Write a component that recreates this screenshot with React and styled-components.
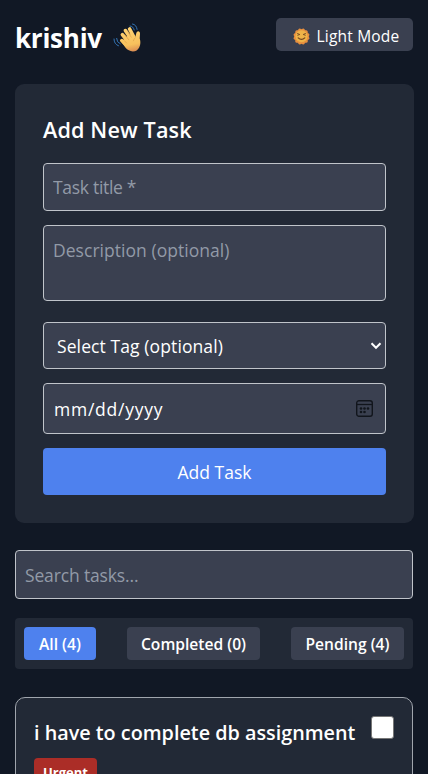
import React from "react";
import styled, { createGlobalStyle } from "styled-components";

const Global = createGlobalStyle`
  *, *::before, *::after { box-sizing: border-box; }
  html, body { margin: 0; background: #111825; }
  body { height: 774px; overflow: hidden; }
  body, button, input, textarea, select {
    font-family: "Open Sans", "Noto Sans", sans-serif;
  }
`;

const Page = styled.main`
  height: 774px;
  overflow: hidden;
  padding: 18px 15px 0;
  color: #fff;
`;

const Header = styled.header`
  display: flex;
  justify-content: space-between;
  height: 66px;
`;

const Greeting = styled.h1`
  display: flex;
  align-items: center;
  gap: 11px;
  margin: 0;
  height: 40px;
  font-size: 26px;
  line-height: 40px;
  font-weight: 700;
  letter-spacing: -0.25px;
`;

const ThemeToggle = styled.button`
  display: flex;
  align-items: center;
  gap: 7px;
  width: 137.5px;
  height: 33px;
  padding: 3px 0 0 17px;
  border: 0;
  border-radius: 5px;
  background: #3a4050;
  color: #fff;
  font-size: 15.5px;
  letter-spacing: 0.2px;
  white-space: nowrap;
`;

const FormCard = styled.form`
  display: flex;
  flex-direction: column;
  height: 438.5px;
  padding: 31px 27.5px 0 28px;
  margin-right: -0.5px;
  border-radius: 9px;
  background: #222936;
`;

const FormTitle = styled.h2`
  margin: 0 0 18px;
  font-size: 21.6px;
  line-height: 30px;
  font-weight: 600;
  letter-spacing: 0.15px;
`;

const fieldBase = `
  display: block;
  width: 100%;
  margin: 0;
  border: 1px solid #c0c4ca;
  border-radius: 4px;
  background: #3a4050;
  color: #fff;
  font-size: 17.5px;
  outline: none;
  &::placeholder { color: #929aa7; opacity: 1; }
`;

const TextInput = styled.input`
  ${fieldBase}
  flex: none;
  height: 48px;
  padding: 0 10px 1px 9px;
  letter-spacing: -0.3px;
`;

const TextArea = styled.textarea`
  ${fieldBase}
  flex: none;
  height: 76px;
  margin-top: 14px;
  padding: 11px 9px;
  line-height: 26px;
  letter-spacing: 0.04px;
  resize: none;
`;

const SelectWrap = styled.div`
  position: relative;
  margin-top: 21px;
  svg { position: absolute; right: 4.5px; top: 19px; }
`;

const Select = styled.select`
  ${fieldBase}
  height: 47px;
  padding: 1px 24px 0 13px;
  letter-spacing: 0.1px;
  appearance: none;
`;

const DateField = styled.div`
  ${fieldBase}
  display: flex;
  align-items: center;
  justify-content: space-between;
  height: 51px;
  margin-top: 14px;
  padding: 1px 12px 0 10px;
  letter-spacing: 0.75px;
  svg { margin-top: -2px; }
`;

const SubmitButton = styled.button`
  height: 47px;
  margin-top: 14px;
  padding: 1px 0 0;
  border: 0;
  border-radius: 4px;
  background: #4e81ee;
  color: #fff;
  font-size: 17.5px;
`;

const SearchInput = styled(TextInput)`
  height: 49px;
  margin-top: 27.5px;
  padding: 1px 10px 0 9px;
  letter-spacing: -0.15px;
`;

const FilterBar = styled.nav`
  display: flex;
  justify-content: space-between;
  height: 51px;
  margin-top: 19px;
  padding: 9px 9px 0;
  border-radius: 4px;
  background: #222936;
`;

const FilterButton = styled.button`
  width: ${(p) => p.$width}px;
  height: 33px;
  padding: 1px 0 0;
  border: 0;
  border-radius: 4px;
  background: ${(p) => (p.$active ? "#4e81ee" : "#3a4050")};
  color: #fff;
  font-size: 15.6px;
  font-weight: 600;
  white-space: nowrap;
`;

const TaskCard = styled.article`
  height: 160px;
  margin-top: 28px;
  padding: 18px 18px 0;
  border: 1px solid #a0a5ad;
  border-radius: 10px;
  background: #222936;
`;

const TaskHead = styled.div`
  display: flex;
  justify-content: space-between;
  height: 42px;
`;

const TaskTitle = styled.h3`
  margin: 0;
  font-size: 19.8px;
  line-height: 34px;
  font-weight: 600;
  white-space: nowrap;
`;

const Checkbox = styled.input`
  appearance: none;
  flex: none;
  width: 23px;
  height: 23px;
  margin: 0;
  border: 1px solid #767676;
  border-radius: 3px;
  background: #fff;
`;

const Tag = styled.span`
  display: inline-block;
  width: 63px;
  height: 28px;
  border-radius: 4px;
  background: #ab2d27;
  font-size: 13px;
  line-height: 28px;
  font-weight: 700;
  text-align: center;
`;

const WaveIcon = () => (
  <svg width="30" height="30" viewBox="0 0 30 30" fill="none">
    <defs>
      <linearGradient id="hand" x1="14" y1="5" x2="19" y2="29" gradientUnits="userSpaceOnUse">
        <stop stopColor="#ffd273" />
        <stop offset=".7" stopColor="#f7c05c" />
        <stop offset="1" stopColor="#d98a52" />
      </linearGradient>
    </defs>
    <g stroke="#3474b4" strokeWidth="1" strokeLinecap="round">
      <path d="M17 3q3.2 0 4.2 4M19.5 1q4 .6 4.6 5.4M1 16q0 5.2 4.5 6.8M3.6 15.4q0 4 3.6 5.4" />
    </g>
    <g stroke="url(#hand)" strokeWidth="3.6" strokeLinecap="round">
      <path d="m8.8 17.6 6 6.2M9.4 11.6l6.4 8.2M12.4 7.6l6 9M16.6 6l4.4 8.4" />
    </g>
    <path d="M12 14.5 18 11l4.2 3.6 1.2-4.8Q24.2 7.6 26 8.4q1.3.6 1 2.6l-.3 4.2q1.5 5.4-.4 9Q24.3 28.4 19.8 28.4q-4.3 0-7.4-3.8L9 19.6Z" fill="url(#hand)" />
    <path d="m11.8 11.6 4 5.2M15 8.8l3.2 5.4M11.5 17.8l2 2.2M22.2 14.8q-1.4 1-1.8 3" stroke="#dfa148" strokeWidth=".7" strokeLinecap="round" />
  </svg>
);

const SunIcon = () => (
  <svg width="17" height="17" viewBox="0 0 17 17" fill="none">
    <g fill="#e8903f">
      <rect x="2.3" y="2.3" width="12.4" height="12.4" rx="1.5" />
      <rect x="2.3" y="2.3" width="12.4" height="12.4" rx="1.5" transform="rotate(30 8.5 8.5)" />
      <rect x="2.3" y="2.3" width="12.4" height="12.4" rx="1.5" transform="rotate(60 8.5 8.5)" />
    </g>
    <circle cx="8.5" cy="8.3" r="6" fill="#efb448" />
    <path d="m4.2 5.4 2.6 1.1-2.5.8M12.8 5.4l-2.6 1.1 2.5.8" stroke="#704421" strokeWidth=".9" />
    <path d="M5.2 9.8q3.3 3.3 6.6 0" stroke="#704421" strokeWidth="1.2" strokeLinecap="round" />
  </svg>
);

const ChevronIcon = () => (
  <svg width="12" height="10" viewBox="0 0 12 10" fill="none">
    <path d="m1.5 2.3 4.5 4.5 4.5-4.5" stroke="#fff" strokeWidth="2" />
  </svg>
);

const CalendarIcon = () => (
  <svg width="17" height="17" viewBox="0 0 17 17" fill="none">
    <rect x=".7" y=".7" width="15.6" height="15.6" rx="2.3" stroke="#11151c" strokeWidth="1.4" />
    <path d="M1 4.5h15" stroke="#11151c" strokeWidth="1.3" />
    <g fill="#11151c">
      <circle cx="5" cy="8.5" r="1.3" />
      <circle cx="8.5" cy="8.5" r="1.3" />
      <circle cx="12" cy="8.5" r="1.3" />
      <circle cx="5" cy="12" r="1.3" />
      <circle cx="8.5" cy="12" r="1.3" />
    </g>
  </svg>
);

const filters = [
  { label: "All (4)", width: 72, active: true },
  { label: "Completed (0)", width: 133 },
  { label: "Pending (4)", width: 113 },
];

export default function App() {
  return (
    <>
      <Global />
      <Page>
        <Header>
          <Greeting>krishiv <WaveIcon /></Greeting>
          <ThemeToggle type="button"><SunIcon />Light Mode</ThemeToggle>
        </Header>
        <FormCard onSubmit={(e) => e.preventDefault()}>
          <FormTitle>Add New Task</FormTitle>
          <TextInput placeholder="Task title *" />
          <TextArea placeholder="Description (optional)" />
          <SelectWrap>
            <Select defaultValue="">
              <option value="">Select Tag (optional)</option>
              <option>Urgent</option>
            </Select>
            <ChevronIcon />
          </SelectWrap>
          <DateField>mm/dd/yyyy<CalendarIcon /></DateField>
          <SubmitButton type="submit">Add Task</SubmitButton>
        </FormCard>
        <SearchInput placeholder="Search tasks..." />
        <FilterBar>
          {filters.map((f) => (
            <FilterButton key={f.label} type="button" $width={f.width} $active={f.active}>
              {f.label}
            </FilterButton>
          ))}
        </FilterBar>
        <TaskCard>
          <TaskHead>
            <TaskTitle>i have to complete db assignment</TaskTitle>
            <Checkbox type="checkbox" />
          </TaskHead>
          <Tag>Urgent</Tag>
        </TaskCard>
      </Page>
    </>
  );
}
